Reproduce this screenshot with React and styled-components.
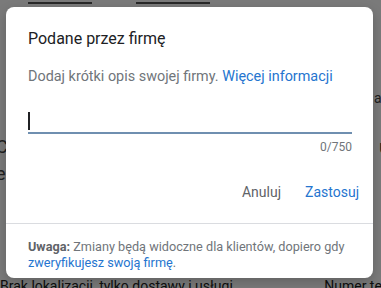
import React from "react";
import styled, { createGlobalStyle } from "styled-components";

const Global = createGlobalStyle`
  html, body { margin: 0; padding: 0; }
  body { font-family: Roboto, "Liberation Sans", Arial, sans-serif; background: #fff; }
  * { box-sizing: border-box; }
`;

const Page = styled.div`
  position: relative;
  width: 381px;
  height: 288px;
  overflow: hidden;
  background: #fff;
`;

const Backdrop = styled.div`
  display: flex;
  flex-direction: column;
  height: 100%;
  color: #444;
  font-size: 14px;
`;

const TopStrip = styled.div`
  display: flex;
  gap: 44px;
  padding: 2px 0 0 28px;
  height: 72px;
`;

const TopBar = styled.div`
  width: ${(p) => p.$w}px;
  height: 2px;
  background: #555;
`;

const BgRow = styled.div`
  display: flex;
  justify-content: space-between;
  align-items: center;
  height: ${(p) => p.$h}px;
  margin-left: -4px;
  margin-right: -8px;
  font-size: ${(p) => p.$size || 14}px;
`;

const BgBottom = styled.div`
  margin-top: auto;
  display: flex;
  align-items: center;
  justify-content: space-between;
  height: 12px;
  margin-bottom: -4px;
  margin-right: -40px;
  font-size: 14px;
  color: #222;
  white-space: nowrap;
`;

const Overlay = styled.div`
  position: absolute;
  inset: 0;
  background: rgba(0, 0, 0, 0.52);
  padding: 7px 8px 10px 6px;
`;

const Dialog = styled.div`
  background: #fff;
  border-radius: 8px;
  height: 271px;
  display: flex;
  flex-direction: column;
  box-shadow: 0 4px 12px rgba(0, 0, 0, 0.2);
`;

const Body = styled.div`
  padding: 20px 21px 0 22px;
`;

const Title = styled.h2`
  margin: 0;
  font-size: 16px;
  line-height: 24px;
  font-weight: 400;
  color: #202124;
`;

const Desc = styled.p`
  margin: 16px 0 0;
  font-size: 14.4px;
  line-height: 20px;
  color: #70757a;
  white-space: nowrap;
`;

const Link = styled.a`
  color: #2575cf;
  text-decoration: none;
`;

const Field = styled.div`
  margin-top: 21px;
  height: 26px;
  border-bottom: 2px solid #6f8fb0;
  display: flex;
  align-items: flex-end;
  padding-bottom: 2px;
`;

const Caret = styled.span`
  display: block;
  width: 1.5px;
  height: 18px;
  background: #202124;
`;

const Counter = styled.div`
  margin-top: 5px;
  text-align: right;
  font-size: 12px;
  line-height: 16px;
  color: #70757a;
`;

const Actions = styled.div`
  display: flex;
  justify-content: flex-end;
  gap: 8px;
  padding: 19px 6px 13px;
`;

const Button = styled.button`
  border: 0;
  background: transparent;
  height: 36px;
  padding: 0 8px;
  font-family: Roboto, "Liberation Sans", Arial, sans-serif;
  font-size: 14px;
  font-weight: 400;
  color: ${(p) => (p.$primary ? "#2575cf" : "#5f6368")};
`;

const Divider = styled.div`
  height: 1px;
  background: #dadce0;
`;

const Footer = styled.div`
  padding: 15px 8px 0 22px;
  font-size: 12.7px;
  line-height: 16px;
  color: #70757a;
`;

const Strong = styled.b`
  font-weight: 700;
  color: #5f6368;
`;

export default function App() {
  return (
    <Page>
      <Global />
      <Backdrop>
        <TopStrip>
          <TopBar $w={64} />
          <TopBar $w={74} />
        </TopStrip>
        <BgRow $h={52}>
          <span />
          <span>ac</span>
        </BgRow>
        <BgRow $h={44} $size={18}>
          <span>C</span>
          <span>u</span>
        </BgRow>
        <BgRow $h={10} $size={18}>
          <span>e</span>
          <span />
        </BgRow>
        <BgBottom>
          <span>Brak lokalizacji, tylko dostawy i usługi</span>
          <span>Numer telefonu</span>
        </BgBottom>
      </Backdrop>
      <Overlay>
        <Dialog>
          <Body>
            <Title>Podane przez firmę</Title>
            <Desc>
              Dodaj krótki opis swojej firmy. <Link href="#">Więcej informacji</Link>
            </Desc>
            <Field>
              <Caret />
            </Field>
            <Counter>0/750</Counter>
          </Body>
          <Actions>
            <Button>Anuluj</Button>
            <Button $primary>Zastosuj</Button>
          </Actions>
          <Divider />
          <Footer>
            <Strong>Uwaga:</Strong> Zmiany będą widoczne dla klientów, dopiero gdy{" "}
            <Link href="#">zweryfikujesz swoją firmę</Link>.
          </Footer>
        </Dialog>
      </Overlay>
    </Page>
  );
}
